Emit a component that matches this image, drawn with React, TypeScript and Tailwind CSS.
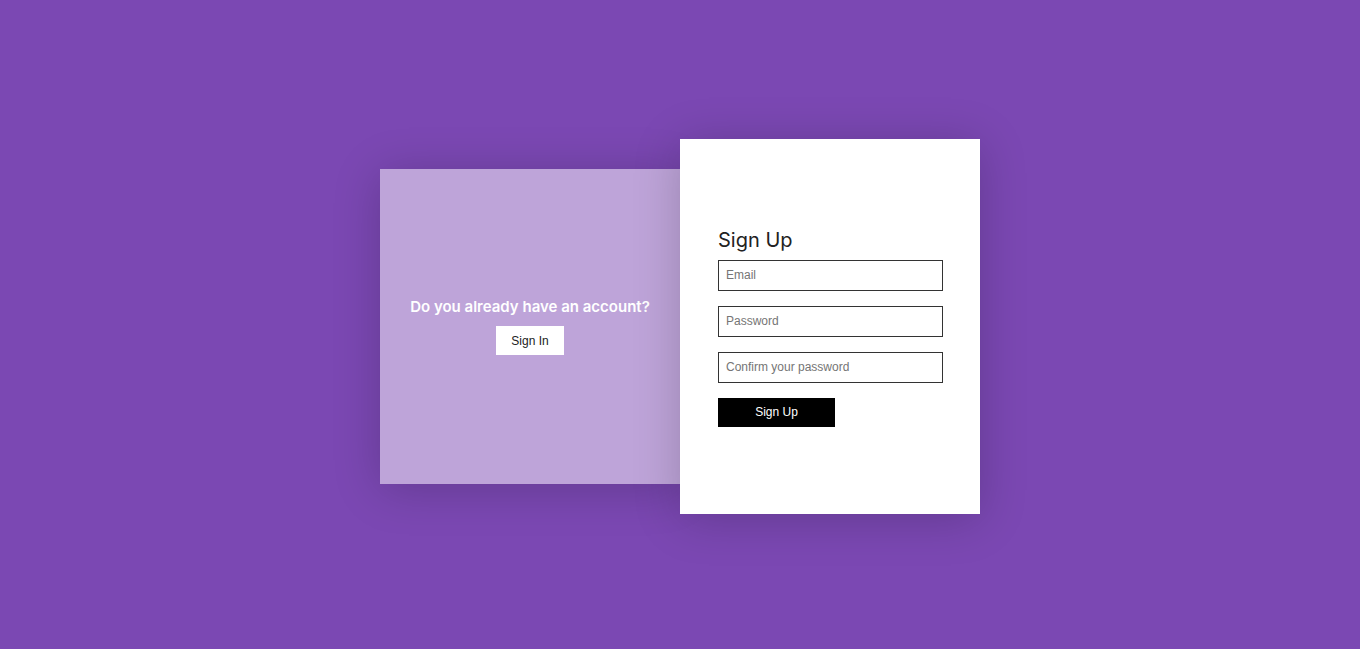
const App: React.FC = () => {
  return (
    <div className="w-full h-screen bg-[#7b48b3] flex items-center justify-center pt-1 font-['Liberation_Sans',Arial,sans-serif]">
      <div className="flex items-center">
        <div className="w-[300px] h-[315px] bg-[#bea4d9] shadow-[0_5px_45px_rgba(0,0,0,0.2)] flex flex-col items-center justify-center pb-[2px]">
          <h2 className="text-white text-[15px] font-semibold font-['Inter','Noto_Sans',sans-serif] mb-[8px]">
            Do you already have an account?
          </h2>
          <button className="bg-white text-[#222] text-[12px] w-[68px] h-[29px]">
            Sign In
          </button>
        </div>
        <div className="w-[300px] h-[375px] bg-white shadow-[0_5px_45px_rgba(0,0,0,0.2)] px-[38px] flex flex-col justify-center pt-[1px] z-10">
          <h1 className="text-[20px] text-[#222] font-['Inter','Noto_Sans',sans-serif] leading-[24px] mb-[8px]">
            Sign Up
          </h1>
          <form className="flex flex-col gap-[15px]" onSubmit={(e) => e.preventDefault()}>
            <input
              type="email"
              placeholder="Email"
              className="w-[225px] h-[31px] border border-[#333] px-[7px] text-[12px] placeholder:text-[#757575] outline-none"
            />
            <input
              type="password"
              placeholder="Password"
              className="w-[225px] h-[31px] border border-[#333] px-[7px] text-[12px] placeholder:text-[#757575] outline-none"
            />
            <input
              type="password"
              placeholder="Confirm your password"
              className="w-[225px] h-[31px] border border-[#333] px-[7px] text-[12px] placeholder:text-[#757575] outline-none"
            />
            <button className="w-[117px] h-[29px] bg-black text-white text-[12px]">
              Sign Up
            </button>
          </form>
        </div>
      </div>
    </div>
  );
};

export default App;
